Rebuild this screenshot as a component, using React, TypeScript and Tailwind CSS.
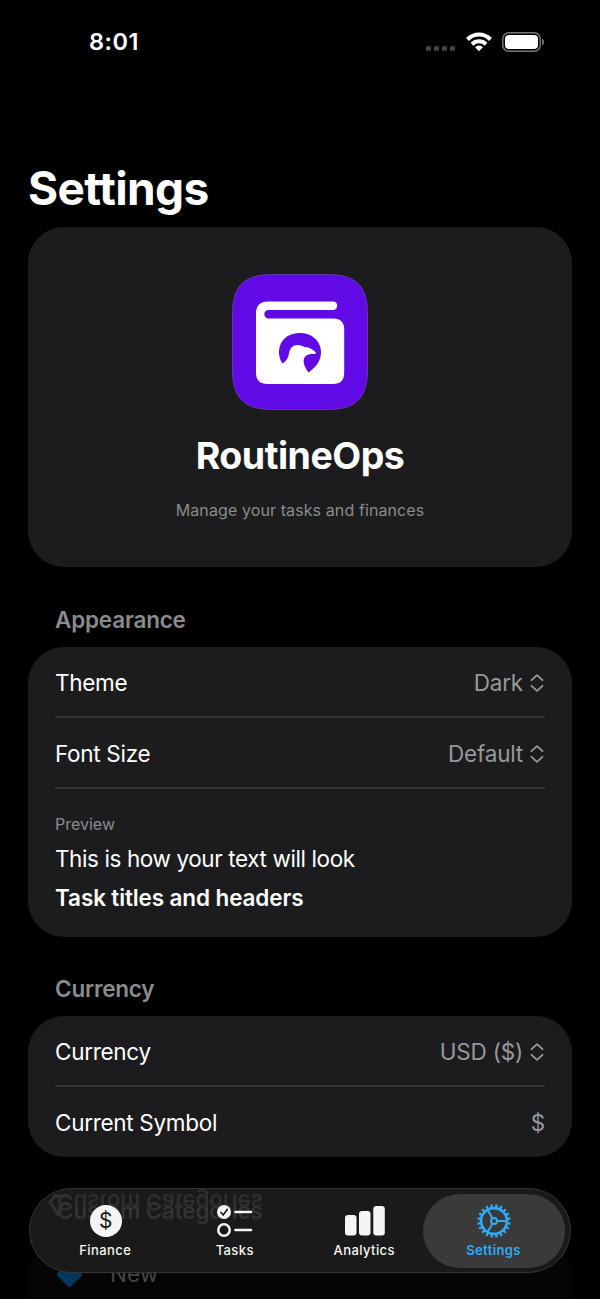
import type { ReactNode } from 'react';
import clsx from 'clsx';

const gearTeeth = Array.from({ length: 20 }, (_, i) => i * 18 + 9);

function StatusBar() {
  return (
    <header className="flex h-[84px] items-center justify-between pr-[55px] pl-[89px]">
      <span className="text-[23.5px] leading-none font-semibold tracking-[0.5px]">8:01</span>
      <div className="flex items-center">
        <div className="mt-[13px] mr-[11px] flex gap-[3px]">
          {[0, 1, 2, 3].map((dot) => (
            <span key={dot} className="size-[5px] rounded-[1.5px] bg-[#444446]" />
          ))}
        </div>
        <svg width="26" height="20" viewBox="0 0 26 20" fill="none" stroke="#fff" strokeWidth="4">
          <path d="M1.500 7.500C8 .9 18 .9 24.500 7.500" />
          <path d="M6 12.200C10 8.300 16 8.300 20 12.200" />
          <path d="M13 19.200 9 15.200Q13 11.600 17 15.200Z" fill="#fff" stroke="none" />
        </svg>
        <svg className="ml-[10px]" width="43" height="20" viewBox="0 0 43 20">
          <rect x=".8" y=".8" width="37.400" height="18.400" rx="6" fill="none" stroke="#77777a" strokeWidth="1.500" />
          <rect x="3" y="3" width="33" height="14" rx="4" fill="#fff" />
          <path d="M40 6.500Q42 7.300 42 10T40 13.500Z" fill="#77777a" />
        </svg>
      </div>
    </header>
  );
}

function AppLogo() {
  return (
    <svg width="136" height="136" viewBox="0 0 136 136">
      <path
        d="M40 .5H96C124 .5 135.500 12 135.500 40V96C135.500 124 124 135.500 96 135.500H40C12 135.500 .5 124 .5 96V40C.5 12 12 .5 40 .5Z"
        fill="#610ae5"
        stroke="#6f3bae"
        strokeWidth=".8"
      />
      <path
        d="M36 27.500H101.500A4.300 4.300 0 0 1 101.500 36H36.500A4.200 4.200 0 0 0 36.500 44.400H101Q112.200 44.400 112.200 55.500V98.500Q112.200 110 101 110H35.500Q24 110 24 98.500V39.500Q24 27.500 36 27.500Z"
        fill="#fff"
      />
      <path
        d="M50.600 89.500C43 79 47 59 68 59C89 59 97 83 79.500 96L76.500 98.500C70 90 70 82.500 76.500 80.500C79.500 79.500 83.500 81 84 78.500C81 75 76 73 72.500 73C67 69.500 60 70.500 58 76C56 81 57.500 84.500 50.600 89.500Z"
        fill="#610ae5"
      />
    </svg>
  );
}

function UpDown() {
  return (
    <svg className="mr-px ml-[7px]" width="14" height="18" viewBox="0 0 14 18" fill="none" stroke="#98989a" strokeWidth="1.800" strokeLinecap="round" strokeLinejoin="round">
      <path d="m1.500 6.200 5.500-5 5.500 5M1.500 11.800l5.500 5 5.500-5" />
    </svg>
  );
}

function SectionTitle({ children }: { children: ReactNode }) {
  return (
    <h2 className="mb-[13px] pl-[27px] text-[22.5px] leading-[28px] font-semibold tracking-[-0.2px] text-[#8b8b8d]">
      {children}
    </h2>
  );
}

type RowProps = {
  label: string;
  value: string;
  picker?: boolean;
  divider?: boolean;
};

function Row({ label, value, picker, divider }: RowProps) {
  return (
    <div className={clsx('flex h-[71px] items-center justify-between text-[22.5px] leading-[28px]', divider && 'border-b-2 border-[#353537] pt-[2px]')}>
      <span className="tracking-[-0.3px]">{label}</span>
      <span className="flex items-center tracking-[-0.2px] text-[#98989a]">
        {value}
        {picker && <UpDown />}
      </span>
    </div>
  );
}

function FinanceIcon() {
  return (
    <span className="ml-px flex size-8 items-center justify-center rounded-full bg-[#f5f5f5] text-[21px] leading-none font-normal tracking-normal text-[#1a1a1a]">$</span>
  );
}

function TasksIcon() {
  return (
    <svg width="36" height="32" viewBox="0 0 36 32" fill="none" stroke="#f5f5f5" strokeWidth="2.700" strokeLinecap="round">
      <circle cx="7" cy="7" r="7" fill="#f5f5f5" stroke="none" />
      <path d="m4 7.500 2.200 2.500 4-5.500" stroke="#1a1a1a" strokeWidth="1.700" />
      <circle cx="7" cy="25" r="5.700" strokeWidth="2.500" />
      <path d="M18.500 7h15.500M18.500 25h15.500" />
    </svg>
  );
}

function AnalyticsIcon() {
  return (
    <svg className="ml-[2px]" width="40" height="32" viewBox="0 0 40 32" fill="#f5f5f5">
      <rect x="0" y="10" width="11.500" height="20.500" rx="3" />
      <rect x="14" y="6" width="11.500" height="24.500" rx="3" />
      <rect x="28.300" y="1" width="11.500" height="29.500" rx="3" />
    </svg>
  );
}

function GearIcon() {
  return (
    <svg className="ml-px" width="34" height="34" viewBox="-17 -17 34 34" fill="none" stroke="#32a9f5" strokeWidth="2">
      <circle r="12.900" strokeWidth="2.600" />
      <circle r="3" />
      {gearTeeth.map((angle) => (
        <path key={angle} d="M13.500 0h3.200" strokeWidth="2.300" transform={`rotate(${angle})`} />
      ))}
      <path d="M3.500 0H13M-1.750-3.030-6.500-11.300M-1.750 3.030-6.500 11.300" />
    </svg>
  );
}

const tabs = [
  { label: 'Finance', icon: FinanceIcon },
  { label: 'Tasks', icon: TasksIcon },
  { label: 'Analytics', icon: AnalyticsIcon },
  { label: 'Settings', icon: GearIcon, active: true },
];

function TabBar() {
  return (
    <nav className="absolute top-[1188px] left-[29px] flex h-[85px] w-[542px] items-center overflow-hidden rounded-full border border-[#343434] bg-[#1a1a1a] pr-[5px] pl-[4px]">
      {/* content refracted through the glass */}
      <div className="absolute top-[4px] left-[27px] text-[22.5px] leading-[28px] font-semibold tracking-[-0.2px] whitespace-nowrap text-[#333] blur-[0.7px]">
        <div className="translate-y-[4px]">Custom Categories</div>
        <div aria-hidden="true" className="absolute -top-[5px] left-0 scale-y-[-1] text-[#2e2e2e]">Custom Categories</div>
      </div>
      <svg className="absolute top-[5px] left-[17px] blur-[0.5px]" width="22" height="25" viewBox="0 0 22 25" fill="none" stroke="#303030" strokeWidth="3">
        <path d="M22 2H8L3 8l9 14" />
      </svg>
      <div className="relative flex w-full">
        {tabs.map(({ label, icon: Icon, active }) => (
          <div
            key={label}
            className={clsx(
              'flex h-[74px] flex-col items-center rounded-full pt-[10px] text-[13px] leading-[16px] tracking-[0.4px]',
              active ? 'w-[142px] bg-[#3a3a3a] font-semibold text-[#32a9f5]' : 'w-[129.500px] pl-[13px] font-medium text-[#f5f5f5]',
            )}
          >
            <div className="flex h-[34px] items-center">
              <Icon />
            </div>
            <span className="mt-[4px]">{label}</span>
          </div>
        ))}
      </div>
    </nav>
  );
}

export default function App() {
  return (
    <div className="relative h-[1299px] w-[600px] overflow-hidden bg-black font-['Inter',sans-serif] text-white">
      <StatusBar />
      <main className="px-[28px]">
        <h1 className="mt-[76px] text-[46px] leading-[56px] font-bold tracking-[-0.6px]">Settings</h1>

        <section className="mt-[11px] mb-[39px] flex h-[340px] flex-col items-center rounded-[36px] bg-[#1c1c1e] pt-[47px]">
          <AppLogo />
          <p className="mt-[23px] text-[37.5px] leading-[46px] font-bold tracking-[-0.5px]">RoutineOps</p>
          <p className="mt-[21px] text-[16px] leading-[20px] tracking-[0.1px] text-[#8b8b8d]">Manage your tasks and finances</p>
        </section>

        <SectionTitle>Appearance</SectionTitle>
        <section className="mb-[38px] h-[290px] rounded-[36px] bg-[#1c1c1e] px-[27px]">
          <Row label="Theme" value="Dark" picker divider />
          <Row label="Font Size" value="Default" picker divider />
          <p className="mt-[25px] text-[16px] leading-[20px] text-[#8b8b8d]">Preview</p>
          <p className="mt-[11px] text-[22.5px] leading-[28px] tracking-[-0.4px]">This is how your text will look</p>
          <p className="mt-[11px] text-[22.5px] leading-[28px] font-semibold tracking-[-0.12px]">Task titles and headers</p>
        </section>

        <SectionTitle>Currency</SectionTitle>
        <section className="h-[141px] rounded-[36px] bg-[#1c1c1e] px-[27px]">
          <Row label="Currency" value="USD ($)" picker divider />
          <Row label="Current Symbol" value="$" />
        </section>

        <section className="mt-[81px] flex h-[100px] gap-[26px] rounded-t-[36px] bg-[#050505] px-[27px] pt-[22px] text-[22.5px] leading-[28px] text-[#454545]">
          <svg width="29" height="29" viewBox="0 0 29 29">
            <rect x="5" y="5" width="19" height="19" rx="2" fill="#04375e" transform="rotate(45 14.500 14.500)" />
          </svg>
          <span>New</span>
        </section>
      </main>
      <TabBar />
    </div>
  );
}
